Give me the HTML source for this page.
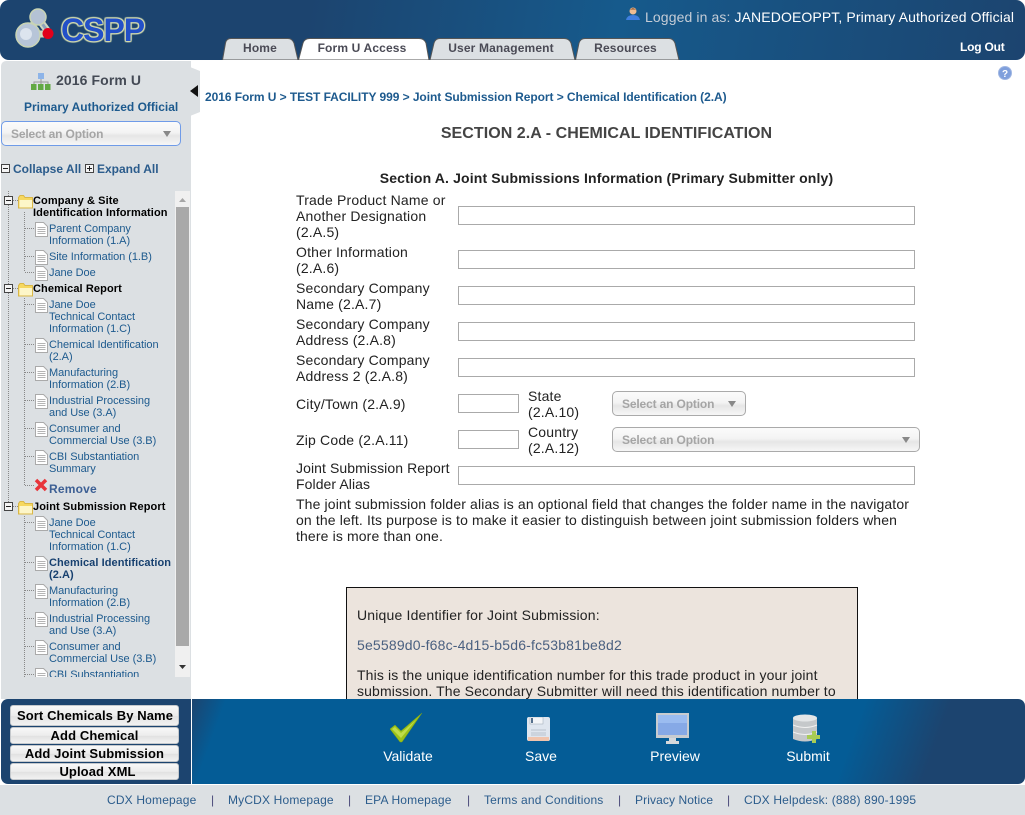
<!DOCTYPE html>
<html><head><meta charset="utf-8"><title>CSPP</title>
<style>
html,body{margin:0;padding:0}
body{width:1025px;height:815px;position:relative;overflow:hidden;background:#fff;font-family:"Liberation Sans",sans-serif;color:#222}
.a,.t,.l,.i,.n{position:absolute}
.t,.l,.n{white-space:nowrap}
.t{font-size:11px;line-height:12px;left:49px;color:#1d5a8e;letter-spacing:-.05px;margin-top:1px}
.h{font-size:11px;line-height:12px;left:33px;color:#000;font-weight:bold;letter-spacing:.1px}
.l{font-size:14px;line-height:16px;left:296px;color:#222;letter-spacing:.18px}
.p{letter-spacing:.13px}
.i{border:1px solid #aaa;height:17px;background:#fff;box-sizing:content-box}
.sel{position:absolute;box-sizing:border-box;border:1px solid #aaa;border-radius:5px;background:linear-gradient(#fbfbfb 0,#f4f4f4 45%,#e6e6e6 60%,#f6f6f6 100%);color:#a5a5a5;font-weight:bold;font-size:12px;padding-left:9px;letter-spacing:-.15px}
.sel:after{content:"";position:absolute;top:9px;border-left:4px solid transparent;border-right:4px solid transparent;border-top:6px solid #888;right:9px}
.tab{position:absolute;top:38px;height:22px;text-align:center;font-weight:bold;font-size:12px;line-height:21px;color:#4a4a55;letter-spacing:.15px}
.btn{position:absolute;left:10px;width:169px;box-sizing:border-box;border-radius:3px;border:1px solid #c4c8cc;background:linear-gradient(#f8f8f8,#ececec 50%,#e2e2e2 55%,#f2f2f2);color:#000;font-weight:bold;font-size:13px;text-align:center;letter-spacing:.1px}
.act{position:absolute;top:748px;color:#fff;font-size:14px;line-height:16px;text-align:center;transform:translateX(-50%);white-space:nowrap}
.n{font-size:12px;line-height:14px;top:793px;color:#2b5c8c;letter-spacing:.17px}
.s{font-size:12px;line-height:14px;top:793px;color:#4a4a7a;position:absolute}
</style></head><body>
<svg width="0" height="0" style="position:absolute"><defs>
<g id="doc"><path d="M.5.5h8l4 4v10H.5z" fill="#fff" stroke="#aaa"/><path d="M2.500 5.500h8M2.500 7.500h8M2.500 9.500h8M2.500 11.500h8" stroke="#b4b4b4"/></g>
<g id="fold"><path d="M.5 3.500v10.500h14V3.500H7L5.500 1.500H2z" fill="#f6d860" stroke="#d9b748"/><path d="M1.500 6h12.500v7.500H1.500z" fill="#fdf6c8"/></g>
<g id="box"><rect x=".5" y=".5" width="8" height="8" fill="#f4f4f4" stroke="#444"/><path d="M2 4.500h5" stroke="#222"/></g>
<g id="box2"><rect x=".5" y=".5" width="8" height="8" fill="#f4f4f4" stroke="#444"/><path d="M2 4.500h5M4.500 2v5" stroke="#222"/></g>
</defs></svg>

<!-- header -->
<div class="a" style="left:0;top:0;width:1025px;height:60px;border-radius:9px;background:linear-gradient(100deg,#1c446f 0,#1c446f 30%,#165a8c 60%,#1c446f 100%)"></div>
<svg class="a" style="left:14px;top:6px" width="44" height="44" viewBox="0 0 44 44">
<path d="M24 12L13 27M24 12L35 27M14 28L34 28" stroke="#cfd8c0" stroke-width="7" fill="none"/>
<path d="M24 12L13 27M24 12L35 27" stroke="#8ea3bb" stroke-width="3" fill="none"/>
<circle cx="24" cy="11" r="8" fill="#b4c2d4" stroke="#c9d4b4" stroke-width="1.500"/>
<circle cx="14" cy="29" r="12" fill="#b7c5d8" stroke="#c9d4b4" stroke-width="1.500"/>
<circle cx="12" cy="28" r="6" fill="#dce4ee"/>
<circle cx="34" cy="27.500" r="5.500" fill="#e2001a"/>
</svg>
<div class="a" style="left:61px;top:10px;font-size:32px;line-height:40px;font-weight:bold;color:#2350c8;text-shadow:0 0 1px #d4dcae,1px 0 1px #d4dcae,-1px 0 1px #d4dcae,0 1px 1px #d4dcae,0 -1px 1px #d4dcae,1px 1px 1px #d4dcae,-1px -1px 1px #d4dcae,1px -1px 1px #d4dcae,-1px 1px 1px #d4dcae;letter-spacing:-1px">CSPP</div>
<svg class="a" style="left:626px;top:7px" width="14" height="14" viewBox="0 0 14 14"><circle cx="7" cy="4" r="3.500" fill="#eebd92"/><path d="M3.500 3.500Q7-1 10.500 3.500L9 2.500H5z" fill="#8a4a22"/><path d="M0 13Q1 8 7 8t7 5z" fill="#3f7fe0"/></svg>
<div class="a" style="left:645px;top:9px;font-size:14px;line-height:16px;white-space:nowrap;color:#c4ccd6;letter-spacing:.11px">Logged in as: <span style="color:#fff">JANEDOEOPPT, Primary Authorized Official</span></div>
<div class="a" style="left:960px;top:40px;font-size:12px;line-height:14px;font-weight:bold;color:#fff;letter-spacing:-.2px">Log Out</div>
<svg class="a" style="left:220px;top:36px" width="462" height="24">
<path d="M2.500 24L5.500 7Q6.500 2.500 11 2.500H68Q72 2.500 74 7L78 24z" fill="#dce0e3" stroke="#555"/>
<path d="M78.500 24L83 7Q84.500 2.500 90 2.500H199Q204 2.500 206 7L209 24z" fill="#fff" stroke="#555"/>
<path d="M210 24L214 7Q215.500 2.500 220 2.500H344Q349 2.500 351 7L355 24z" fill="#dce0e3" stroke="#555"/>
<path d="M355.500 24L359 7Q360.500 2.500 365 2.500H449Q453 2.500 455 7L459 24z" fill="#dce0e3" stroke="#555"/>
</svg>
<div class="tab" style="left:223px;width:74px">Home</div>
<div class="tab" style="left:297px;width:130px">Form U Access</div>
<div class="tab" style="left:429px;width:144px">User Management</div>
<div class="tab" style="left:574px;width:103px">Resources</div>
<svg class="a" style="left:998px;top:66px" width="14" height="14" viewBox="0 0 14 14"><circle cx="7" cy="7" r="6.500" fill="#7f9fdc" stroke="#9fb6e2"/><text x="7" y="11" font-family="Liberation Sans" font-size="10" font-weight="bold" fill="#fff" text-anchor="middle">?</text></svg>

<!-- sidebar -->
<div class="a" style="left:1px;top:61px;width:190px;height:638px;background:#dce0e3;border-radius:5px 0 0 0"></div>
<svg class="a" style="left:190px;top:67px" width="10" height="49"><path d="M0 0L10 4V45L0 49z" fill="#dce0e3"/><path d="M0 24L8 18V30z" fill="#111"/></svg>
<svg class="a" style="left:31px;top:73px" width="20" height="17" viewBox="0 0 20 17"><rect x="7" y="0" width="6" height="6" fill="#8db4e8"/><path d="M10 6v3M3 11V9h14v2M10 9v2" stroke="#999" fill="none"/><rect x="0" y="11" width="5.500" height="6" fill="#62a944"/><rect x="7" y="11" width="5.500" height="6" fill="#62a944"/><rect x="14" y="11" width="5.500" height="6" fill="#62a944"/></svg>
<div class="a" style="left:56px;top:72px;font-size:14px;line-height:16px;font-weight:bold;color:#444a55;letter-spacing:.1px;white-space:nowrap">2016 Form U</div>
<div class="a" style="left:24px;top:100px;font-size:12px;line-height:15px;font-weight:bold;color:#1d5a8e;white-space:nowrap">Primary Authorized Official</div>
<div class="sel" style="left:1px;top:121px;width:180px;height:25px;line-height:25px;border:1px solid #6f9be8;border-radius:5px">Select an Option</div>
<svg class="a" style="left:1px;top:164px" width="10" height="10"><use href="#box"/></svg>
<div class="a" style="left:13px;top:162px;font-size:12px;line-height:14px;font-weight:bold;color:#2b5c8c;white-space:nowrap">Collapse All</div>
<svg class="a" style="left:85px;top:164px" width="10" height="10"><use href="#box2"/></svg>
<div class="a" style="left:97px;top:162px;font-size:12px;line-height:14px;font-weight:bold;color:#2b5c8c;white-space:nowrap">Expand All</div>

<!-- tree -->
<div class="a" style="left:0;top:191px;width:175px;height:486px;overflow:hidden">
<svg class="a" style="left:0;top:0" width="60" height="486"><g stroke="#888" stroke-dasharray="1 1" fill="none">
<path d="M8.500 0V315M24.500 21V81M24.500 107V294M24.500 325V486M13 9.500h5M13 97.500h5M13 315.500h5"/>
<path d="M25 37.500h9M25 65.500h9M25 81.500h9M25 113.500h9M25 153.500h9M25 181.500h9M25 209.500h9M25 237.500h9M25 265.500h9M25 294.500h9M25 331.500h9M25 371.500h9M25 399.500h9M25 427.500h9M25 455.500h9M25 483.500h9"/></g>
<g transform="translate(4,5)"><use href="#box"/></g><g transform="translate(4,93)"><use href="#box"/></g><g transform="translate(4,311)"><use href="#box"/></g>
<g transform="translate(18,3)"><use href="#fold"/></g><g transform="translate(18,91)"><use href="#fold"/></g><g transform="translate(18,309)"><use href="#fold"/></g>
<g transform="translate(35,31)"><use href="#doc"/></g><g transform="translate(35,59)"><use href="#doc"/></g><g transform="translate(35,75)"><use href="#doc"/></g>
<g transform="translate(35,107)"><use href="#doc"/></g><g transform="translate(35,147)"><use href="#doc"/></g><g transform="translate(35,175)"><use href="#doc"/></g><g transform="translate(35,203)"><use href="#doc"/></g><g transform="translate(35,231)"><use href="#doc"/></g><g transform="translate(35,259)"><use href="#doc"/></g>
<g transform="translate(35,325)"><use href="#doc"/></g><g transform="translate(35,365)"><use href="#doc"/></g><g transform="translate(35,393)"><use href="#doc"/></g><g transform="translate(35,421)"><use href="#doc"/></g><g transform="translate(35,449)"><use href="#doc"/></g><g transform="translate(35,477)"><use href="#doc"/></g>
<path d="M36 289l10 10M46 289l-10 10" stroke="#e8343a" stroke-width="3.500"/>
</svg>
<div class="t h" style="top:3px">Company &amp; Site</div>
<div class="t h" style="top:15px">Identification Information</div>
<div class="t" style="top:31px">Parent Company</div>
<div class="t" style="top:43px">Information (1.A)</div>
<div class="t" style="top:59px">Site Information (1.B)</div>
<div class="t" style="top:75px">Jane Doe</div>
<div class="t h" style="top:91px">Chemical Report</div>
<div class="t" style="top:107px">Jane Doe</div>
<div class="t" style="top:119px">Technical Contact</div>
<div class="t" style="top:131px">Information (1.C)</div>
<div class="t" style="top:147px">Chemical Identification</div>
<div class="t" style="top:159px">(2.A)</div>
<div class="t" style="top:175px">Manufacturing</div>
<div class="t" style="top:187px">Information (2.B)</div>
<div class="t" style="top:203px">Industrial Processing</div>
<div class="t" style="top:215px">and Use (3.A)</div>
<div class="t" style="top:231px">Consumer and</div>
<div class="t" style="top:243px">Commercial Use (3.B)</div>
<div class="t" style="top:259px">CBI Substantiation</div>
<div class="t" style="top:271px">Summary</div>
<div class="t" style="top:291px;font-size:12px;font-weight:bold;color:#3c5f94;letter-spacing:.2px">Remove</div>
<div class="t h" style="top:309px">Joint Submission Report</div>
<div class="t" style="top:325px">Jane Doe</div>
<div class="t" style="top:337px">Technical Contact</div>
<div class="t" style="top:349px">Information (1.C)</div>
<div class="t" style="top:365px;font-weight:bold;color:#17406f;letter-spacing:.07px">Chemical Identification</div>
<div class="t" style="top:377px;font-weight:bold;color:#17406f;letter-spacing:.07px">(2.A)</div>
<div class="t" style="top:393px">Manufacturing</div>
<div class="t" style="top:405px">Information (2.B)</div>
<div class="t" style="top:421px">Industrial Processing</div>
<div class="t" style="top:433px">and Use (3.A)</div>
<div class="t" style="top:449px">Consumer and</div>
<div class="t" style="top:461px">Commercial Use (3.B)</div>
<div class="t" style="top:477px">CBI Substantiation</div>
</div>
<!-- scrollbar -->
<div class="a" style="left:175px;top:191px;width:15px;height:486px;background:#f0f0f0"></div>
<div class="a" style="left:176px;top:207px;width:13px;height:439px;background:#a9a9a9"></div>
<svg class="a" style="left:175px;top:191px" width="15" height="486"><path d="M4 11l3.500-4 3.500 4z" fill="#a6a6a6"/><path d="M4 474l3.500 4 3.500-4z" fill="#333"/></svg>

<!-- main -->
<div class="a" style="left:205px;top:90px;font-size:12px;line-height:15px;font-weight:bold;color:#1d5a8e;white-space:nowrap;letter-spacing:-.06px">2016 Form U &gt; TEST FACILITY 999 &gt; Joint Submission Report &gt; Chemical Identification (2.A)</div>
<div class="a" style="left:191px;top:124px;width:831px;text-align:center;font-size:16px;line-height:19px;font-weight:bold;color:#444;letter-spacing:.05px">SECTION 2.A - CHEMICAL IDENTIFICATION</div>
<div class="a" style="left:191px;top:170px;width:831px;text-align:center;font-size:14px;line-height:16px;font-weight:bold;color:#222;letter-spacing:.14px">Section A. Joint Submissions Information (Primary Submitter only)</div>

<div class="l" style="top:192px">Trade Product Name or<br>Another Designation<br>(2.A.5)</div>
<div class="i" style="left:458px;top:206px;width:455px"></div>
<div class="l" style="top:244px">Other Information<br>(2.A.6)</div>
<div class="i" style="left:458px;top:250px;width:455px"></div>
<div class="l" style="top:280px">Secondary Company<br>Name (2.A.7)</div>
<div class="i" style="left:458px;top:286px;width:455px"></div>
<div class="l" style="top:316px">Secondary Company<br>Address (2.A.8)</div>
<div class="i" style="left:458px;top:322px;width:455px"></div>
<div class="l" style="top:352px">Secondary Company<br>Address 2 (2.A.8)</div>
<div class="i" style="left:458px;top:358px;width:455px"></div>
<div class="l" style="top:396px">City/Town (2.A.9)</div>
<div class="i" style="left:458px;top:394px;width:59px"></div>
<div class="l" style="left:528px;top:388px">State<br>(2.A.10)</div>
<div class="sel" style="left:612px;top:391px;width:134px;height:25px;line-height:25px">Select an Option</div>
<div class="l" style="top:432px">Zip Code (2.A.11)</div>
<div class="i" style="left:458px;top:430px;width:59px"></div>
<div class="l" style="left:528px;top:424px">Country<br>(2.A.12)</div>
<div class="sel" style="left:612px;top:427px;width:308px;height:25px;line-height:25px">Select an Option</div>
<div class="l" style="top:460px;letter-spacing:.08px">Joint Submission Report<br>Folder Alias</div>
<div class="i" style="left:458px;top:466px;width:455px"></div>
<div class="l p" style="top:496px">The joint submission folder alias is an optional field that changes the folder name in the navigator<br>on the left. Its purpose is to make it easier to distinguish between joint submission folders when<br>there is more than one.</div>

<div class="a" style="left:346px;top:587px;width:510px;height:112px;border:1px solid #111;border-bottom:0;background:#ece4dd;overflow:hidden">
<div class="l" style="left:10px;top:19px">Unique Identifier for Joint Submission:</div>
<div class="l" style="left:10px;top:49px;color:#4a6080">5e5589d0-f68c-4d15-b5d6-fc53b81be8d2</div>
<div class="l p" style="left:10px;top:79px">This is the unique identification number for this trade product in your joint<br>submission. The Secondary Submitter will need this identification number to</div>
</div>

<!-- bottom bar -->
<div class="a" style="left:1px;top:699px;width:190px;height:85px;background:#1c446f;border-radius:7px 0 0 7px"></div>
<div class="a" style="left:192px;top:699px;width:833px;height:85px;border-radius:0 7px 7px 0;background:linear-gradient(110deg,#1c446f 0,#045c96 4%,#045c96 78%,#1c446f 88%,#1c446f 100%)"></div>
<div class="btn" style="top:705px;height:21px;line-height:19px;padding-left:1px">Sort Chemicals By Name</div>
<div class="btn" style="top:727px;height:17px;line-height:15px">Add Chemical</div>
<div class="btn" style="top:745px;height:17px;line-height:15px">Add Joint Submission</div>
<div class="btn" style="top:763px;height:17px;line-height:15px;padding-left:6px">Upload XML</div>

<svg class="a" style="left:389px;top:712px" width="34" height="32" viewBox="0 0 34 32"><path d="M1 17L6 13L12 19L33 1L13 30H11z" fill="#9cc21a" stroke="#7fa012" stroke-width=".5"/><path d="M3 17L6 15L12 21L27 8L12 26z" fill="#c0dc4a"/></svg>
<div class="act" style="left:408px">Validate</div>
<svg class="a" style="left:527px;top:717px" width="23" height="25" viewBox="0 0 23 25"><rect x="0" y="0" width="23" height="24" rx="2" fill="#dfe6ef"/><rect x="3" y="0" width="13" height="7" fill="#f3f5f8" stroke="#9aa7b5" stroke-width=".5"/><rect x="4" y="1" width="2" height="5" fill="#56708c"/><path d="M4 13h15M4 16h15M4 18h15" stroke="#b9c2cc"/><rect x="1" y="20" width="21" height="4" fill="#f0c4ad"/></svg>
<div class="act" style="left:541px">Save</div>
<svg class="a" style="left:656px;top:713px" width="33" height="31" viewBox="0 0 33 31"><rect x="0" y="0" width="33" height="25" fill="#c8ccd0"/><rect x="2" y="2" width="29" height="20" fill="#86a9e6"/><rect x="2" y="2" width="29" height="8" fill="#9bbcf0"/><path d="M13 25h7v3h-7zM10 28h13v3H10z" fill="#d5d8db"/></svg>
<div class="act" style="left:675px">Preview</div>
<svg class="a" style="left:793px;top:714px" width="27" height="29" viewBox="0 0 27 29"><path d="M0 4Q12-2 24 4V25Q12 30 0 25z" fill="#c5c8ca"/><ellipse cx="12" cy="4" rx="12" ry="3.500" fill="#e4e6e7"/><path d="M0 11Q12 16 24 11M0 18Q12 23 24 18" stroke="#f1f1f1" fill="none"/><path d="M14 21h5v-4h4v4h4v4h-4v4h-4v-4h-5z" fill="#a8cc54"/></svg>
<div class="act" style="left:808px">Submit</div>

<!-- footer -->
<div class="a" style="left:0;top:785px;width:1025px;height:30px;background:#dce0e3"></div>
<div class="n" style="left:107px">CDX Homepage</div><div class="s" style="left:211px">|</div>
<div class="n" style="left:228px">MyCDX Homepage</div><div class="s" style="left:348px">|</div>
<div class="n" style="left:365px">EPA Homepage</div><div class="s" style="left:467px">|</div>
<div class="n" style="left:484px">Terms and Conditions</div><div class="s" style="left:618px">|</div>
<div class="n" style="left:635px;letter-spacing:.1px">Privacy Notice</div><div class="s" style="left:727px">|</div>
<div class="n" style="left:744px">CDX Helpdesk: (888) 890-1995</div>
</body></html>
